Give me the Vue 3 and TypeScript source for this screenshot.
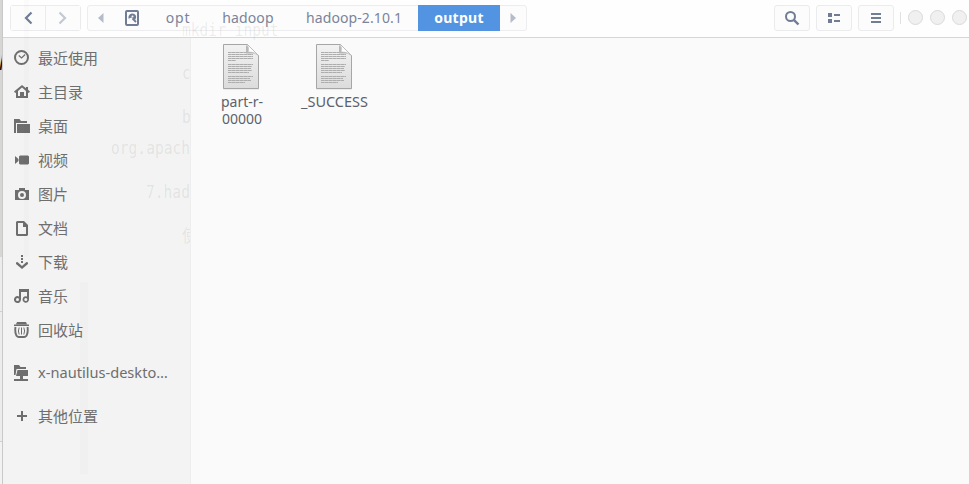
<script setup lang="ts">
interface Place { label: string; icon: string; cls?: string }
const places: Place[] = [
  { label: '最近使用', icon: 'recent' },
  { label: '主目录', icon: 'home' },
  { label: '桌面', icon: 'folder' },
  { label: '视频', icon: 'video' },
  { label: '图片', icon: 'camera' },
  { label: '文档', icon: 'doc' },
  { label: '下载', icon: 'download' },
  { label: '音乐', icon: 'music' },
  { label: '回收站', icon: 'trash' },
  { label: 'x-nautilus-deskto…', icon: 'network', cls: 'spaced latin' },
  { label: '其他位置', icon: 'plus', cls: 'spaced' },
]
const files: { lines: string[]; cls: string }[] = [
  { lines: ['part-r-', '00000'], cls: 'part' },
  { lines: ['_SUCCESS'], cls: 'success' },
]
const paperLines: number[][] = [
  [8, 18], [10, 25], [12, 25], [14, 25], [16, 8],
  [20, 25], [22, 24], [24, 23], [26, 24], [28, 21],
  [32, 25], [34, 22], [36, 23], [38, 17],
]
</script>

<template>
  <div class="screen">
    <div class="behind"><span class="edge-letter">p</span></div>
    <main class="window">
      <header class="toolbar">
        <div class="nav">
          <button class="nav-back"><svg width="16" height="16" viewBox="0 0 16 16"><path d="M11.500 2.500 6 8l5.500 5.500" fill="none" stroke="#717d95" stroke-width="2.200" /></svg></button>
          <button class="nav-next"><svg width="16" height="16" viewBox="0 0 16 16"><path d="M4.500 2.500 10 8l-5.500 5.500" fill="none" stroke="#c3c8d2" stroke-width="2.200" /></svg></button>
        </div>
        <nav class="path">
          <span class="arrow"><svg width="6" height="10" viewBox="0 0 6 10"><path d="M5.500 0v10L0 5z" fill="#b5bbc8" /></svg></span>
          <span class="disk"><svg width="14" height="16" viewBox="0 0 14 16"><rect x="1" y="1" width="12" height="14" rx="1" fill="none" stroke="#717d95" stroke-width="2" /><path d="M7 3.500a3.800 3.800 0 0 0-2.500 6.500L4 8.500l2.500-1 2.500 2h1.500a3.800 3.800 0 0 0-3.500-6z" fill="#717d95" /><circle cx="7.500" cy="6.500" r="1" fill="#fcfcfc" /><path d="m7.500 8.500 3.500 3.500" stroke="#717d95" stroke-width="1.800" /></svg></span>
          <span class="crumb opt">opt</span>
          <span class="crumb hadoop">hadoop</span>
          <span class="crumb version">hadoop-2.10.1</span>
          <span class="crumb current">output</span>
          <span class="arrow"><svg width="6" height="10" viewBox="0 0 6 10"><path d="M.5 0v10L6 5z" fill="#b5bbc8" /></svg></span>
        </nav>
        <div class="tools">
          <button><svg width="16" height="16" viewBox="0 0 16 16"><circle cx="6.500" cy="6.500" r="4.500" fill="none" stroke="#717d95" stroke-width="2" /><path d="m9.800 9.800 4.700 4.700" stroke="#717d95" stroke-width="2.400" /></svg></button>
          <button><svg width="14" height="12" viewBox="0 0 14 12"><path d="M1 1h4v4H1zM1 7h4v4H1zM7 2h6v2H7zM7 8h6v2H7z" fill="#717d95" /></svg></button>
          <button><svg width="10" height="10" viewBox="0 0 10 10"><path d="M0 0h10v2H0zM0 4h10v2H0zM0 8h10v2H0z" fill="#717d95" /></svg></button>
        </div>
        <div class="controls"><i></i><i></i><i></i></div>
      </header>
      <div class="body">
        <aside class="sidebar">
          <div v-for="p in places" :key="p.label" class="place" :class="p.cls">
            <svg class="place-icon" width="16" height="16" viewBox="0 0 16 16" fill="#6e6e6e">
              <template v-if="p.icon === 'recent'"><circle cx="7.500" cy="7.500" r="6.500" fill="none" stroke="#6e6e6e" stroke-width="2" /><path d="m4.800 5.500 2.800 2.500 3.500-3.500" fill="none" stroke="#6e6e6e" stroke-width="1.200" /></template>
              <path v-else-if="p.icon === 'home'" fill-rule="evenodd" d="M8 1 0 7.500 1.200 9 2 8.400V14h12V8.400l.8.600L16 7.500l-2-1.700V3h-2v1.200zM8 3.600l4 3.300V12h-2V8H6v4H4V6.900z" />
              <path v-else-if="p.icon === 'folder'" d="M0 1h5.500l1.500 2h6v2H2v10H0zM3 6h13v9H3z" />
              <path v-else-if="p.icon === 'video'" d="M6 3.500h8l1 1v7l-1 1H6l-1-1v-7zM1 4l3.500 3v2L1 12z" />
              <path v-else-if="p.icon === 'camera'" fill-rule="evenodd" d="M5 2h6v2h4v10H1V4h4zM8 5a4 4 0 1 0 0 8 4 4 0 0 0 0-8zm0 2a2 2 0 1 1 0 4 2 2 0 0 1 0-4z" />
              <path v-else-if="p.icon === 'doc'" fill-rule="evenodd" d="M3 1h7l4 4v10l-1 1H3l-1-1V2zM4 3v11h8V7H9V3z" />
              <path v-else-if="p.icon === 'download'" d="M7 1h2v2H7zM7 4h2v2H7zM7 7h2v2H7zM2 8.500 3.500 8 8 12l4.500-4 1.500.5v1.500L8 15l-6-5z" />
              <path v-else-if="p.icon === 'music'" fill-rule="evenodd" d="M5 1h10v10.500a3.200 3.200 0 1 1-2-3V4H7v7.500a3.500 3.500 0 1 1-2-3.100zM3.500 10a1.500 1.500 0 1 0 0 3 1.500 1.500 0 0 0 0-3zm8.300 0a1.500 1.500 0 1 0 0 3 1.500 1.500 0 0 0 0-3z" />
              <template v-else-if="p.icon === 'trash'"><path d="M2 2.200 3 0h9l1 2.200zM0 2.500h15V4H0z" /><path d="M1.500 5Q.8 9 2 12.500 2.800 15 5 15h5q2.200 0 3-2.500Q14.200 9 13.500 5" fill="none" stroke="#6e6e6e" stroke-width="1.900" /><path d="M5.200 5.500q-1.600 3.500 0 7M7.500 5.500v7M9.800 5.500q1.600 3.500 0 7" fill="none" stroke="#6e6e6e" /></template>
              <path v-else-if="p.icon === 'network'" d="M0 0h5l1.500 2H12v2H2.500L1.500 10H0zM3.500 5H14v6H9v3h5v2H0v-2h6v-3H2z" />
              <path v-else d="M7 3h2v4h4v2H9v4H7V9H3V7h4z" />
            </svg>
            <span>{{ p.label }}</span>
          </div>
        </aside>
        <section class="files">
          <div v-for="f in files" :key="f.cls" class="file" :class="f.cls">
            <svg width="38" height="47" viewBox="0 0 38 47">
              <defs><linearGradient :id="`paper-${f.cls}`" x1="0" y1="0" x2="0" y2="1"><stop offset="0" stop-color="#f2f2f2" /><stop offset="1" stop-color="#dcdcdc" /></linearGradient></defs>
              <path d="M1 45.800h36" stroke="#cecece" />
              <path d="M1.500 1.500h24l11 11v33h-35z" :fill="`url(#paper-${f.cls})`" stroke="#a6a6a6" />
              <path d="M24 2v8.500h9z" fill="#b8b8b8" />
              <path d="M25.500 1.500q1.500 4 .5 7.500 6-.5 10.500 3.500z" fill="#fcfcfc" stroke="#b4b4b4" stroke-width=".7" />
              <path v-for="(l, i) in paperLines" :key="i" :d="`M6 ${l[0] + 1.5}h${l[1]}`" stroke="#adadad" stroke-dasharray="3.700 .3" />
            </svg>
            <div class="file-name"><div v-for="line in f.lines" :key="line">{{ line }}</div></div>
          </div>
        </section>
      </div>
    </main>
    <div class="ghost" aria-hidden="true">
      <div class="stripe top"></div>
      <div class="stripe bottom"></div>
      <span class="g-mkdir">mkdir input</span>
      <div class="ghost-side">
        <span class="g-c">c</span><span class="g-b">b</span><span class="g-org">org.apach</span><span class="g-had">7.had</span><span class="g-cn">使</span>
      </div>
    </div>
  </div>
</template>

<style>
body { margin: 0; overflow: hidden; }
</style>
<style scoped>
* { box-sizing: border-box; }
.screen { position: relative; width: 969px; height: 484px; display: flex; overflow: hidden; font-family: "Noto Sans", "Noto Sans CJK SC", sans-serif; font-size: 14px; background: #fafafa; }
.behind { width: 3px; flex: none; border-right: 1px solid #c9c9c9; background: linear-gradient(#d6d6d4 0 257px, #ececec 257px 311px, #d0d0d0 311px 312px, #ececec 312px 441px, #d0d0d0 441px 442px, #f2f2f2 442px); overflow: hidden; padding-top: 48px; }
.edge-letter { display: block; color: #111; font: italic 20px/22px "Liberation Sans", sans-serif; }
.window { flex: 1; min-width: 0; display: flex; flex-direction: column; }
.toolbar { height: 38px; flex: none; display: flex; padding: 5px 0 0 7px; border-bottom: 1px solid #d5d6d8; background: #fefefe; }
.nav { width: 71px; height: 26px; display: flex; border: 1px solid #ebebed; border-radius: 3px; background: #fdfdfd; }
button { padding: 0; margin: 0; border: 0; background: #fcfcfc; display: flex; align-items: center; justify-content: center; }
.nav button { flex: 1; }
.nav .nav-back { border-right: 1px solid #ebebed; }
.path { margin-left: 6px; width: 440px; height: 26px; display: flex; border: 1px solid #ededef; border-radius: 3px; background: #fcfcfc; color: #7a849b; }
.path > span { display: flex; align-items: center; justify-content: center; }
.arrow { width: 26px; }
.disk { width: 36px; }
.crumb { font-size: 14px; line-height: 24px; letter-spacing: .1px; white-space: nowrap; }
.opt { width: 56px; letter-spacing: .8px; }
.hadoop { width: 84px; }
.version { width: 128px; }
.path .current { width: 82px; height: 26px; margin-top: -1px; background: #5294e2; color: #fff; font-weight: 700; letter-spacing: .3px; }
.tools { margin-left: auto; display: flex; gap: 6px; }
.tools button { width: 36px; height: 26px; border: 1px solid #ebebed; border-radius: 3px; }
.controls { width: 67px; display: flex; gap: 7px; margin: 7px 2px 0 6px; height: 12px; border-left: 1px solid #e1e1e3; padding-left: 7px; }
.controls i { flex: none; width: 15px; height: 15px; margin-top: -2px; border: 1px solid #dadada; border-radius: 50%; background: #f0f0f0; }
.body { flex: 1; display: flex; min-height: 0; }
.sidebar { width: 188px; flex: none; border-right: 1px solid #eeeeee; background: #f3f3f3; padding-top: 3px; color: #6e6e6e; }
.place { height: 34px; padding-left: 11px; display: flex; align-items: center; gap: 8px; font-size: 15px; white-space: nowrap; }
.place span { padding-bottom: 2px; }
.place.latin { font-size: 14.6px; }
.place.spaced { margin-top: 9px; }
.place-icon { flex: none; }
.files { flex: 1; display: flex; gap: 1px; padding: 5px 0 0 4px; background: #fafafa; color: #5c616c; }
.file { width: 92px; display: flex; flex-direction: column; align-items: center; }
.file-name { margin-top: 3px; padding-left: 2px; text-align: center; line-height: 17px; font-size: 14px; }
.success .file-name { padding-left: 1px; font-size: 14.5px; }
.ghost { position: absolute; inset: 0; pointer-events: none; color: rgba(80, 80, 80, .1); overflow: hidden; }
.ghost span { position: absolute; white-space: pre; font: 14.6px/20px "DejaVu Sans Mono", "Noto Sans CJK SC", monospace; transform: scaleY(1.15); }
.stripe { position: absolute; background: rgba(0, 0, 0, .012); }
.stripe.top { left: 24px; top: 0; width: 5px; height: 257px; }
.stripe.bottom { left: 80px; top: 282px; width: 8px; height: 192px; }
.ghost .g-mkdir { left: 182px; top: 20px; }
.ghost-side { position: absolute; left: 0; top: 0; width: 190px; height: 484px; overflow: hidden; }
.ghost .g-c { left: 182px; top: 63px; }
.ghost .g-b { left: 182px; top: 107px; }
.ghost .g-org { left: 111px; top: 138px; }
.ghost .g-had { left: 146px; top: 182px; }
.ghost .g-cn { left: 182px; top: 226px; }
</style>
